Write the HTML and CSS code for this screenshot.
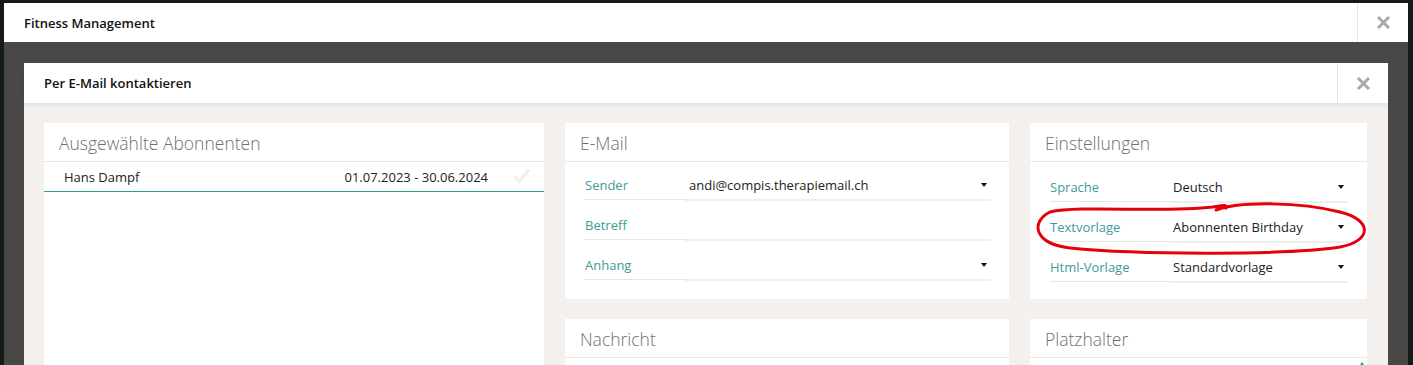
FILE: index.html
```html
<!DOCTYPE html>
<html lang="de">
<head>
<meta charset="utf-8">
<title>Fitness Management</title>
<link rel="stylesheet" href="styles.css">
</head>
<body>
<div class="outer">
  <div class="outer-header">
    <div class="outer-title">Fitness Management</div>
    <div class="close close-outer">
      <svg width="15" height="15" viewBox="0 0 15 15"><path d="M2 2 L13 13 M13 2 L2 13" stroke="#a9a9a9" stroke-width="3" fill="none"/></svg>
    </div>
  </div>
  <div class="outer-body">
    <div class="inner">
      <div class="inner-header">
        <div class="inner-title">Per E-Mail kontaktieren</div>
        <div class="close close-inner">
          <svg width="15" height="15" viewBox="0 0 15 15"><path d="M2 2 L13 13 M13 2 L2 13" stroke="#a9a9a9" stroke-width="3" fill="none"/></svg>
        </div>
      </div>
      <div class="inner-body">
        <section class="panel panel-list">
          <h2 class="panel-title">Ausgewählte Abonnenten</h2>
          <div class="list-row">
            <span class="list-name">Hans Dampf</span>
            <span class="list-date">01.07.2023 - 30.06.2024</span>
            <svg class="list-check" width="16" height="16" viewBox="0 0 16 16"><path d="M1.2 8.6 L5.2 12.4 L13.8 1.4 L15.2 2.6 L5.4 14.8 L0.2 10 Z" fill="none" stroke="#dcdcdc" stroke-width="0.9" stroke-linejoin="round"/></svg>
          </div>
        </section>

        <section class="panel panel-mail">
          <h2 class="panel-title">E-Mail</h2>
          <div class="form">
            <div class="form-row">
              <span class="form-label">Sender</span>
              <span class="form-value">andi@compis.therapiemail.ch<i class="caret"></i></span>
            </div>
            <div class="form-row">
              <span class="form-label">Betreff</span>
              <span class="form-value"></span>
            </div>
            <div class="form-row">
              <span class="form-label">Anhang</span>
              <span class="form-value"><i class="caret"></i></span>
            </div>
          </div>
        </section>

        <section class="panel panel-settings">
          <h2 class="panel-title">Einstellungen</h2>
          <div class="form form-settings">
            <div class="form-row">
              <span class="form-label">Sprache</span>
              <span class="form-value">Deutsch<i class="caret"></i></span>
            </div>
            <div class="form-row">
              <span class="form-label">Textvorlage</span>
              <span class="form-value">Abonnenten Birthday<i class="caret"></i></span>
            </div>
            <div class="form-row">
              <span class="form-label">Html-Vorlage</span>
              <span class="form-value">Standardvorlage<i class="caret"></i></span>
            </div>
          </div>
        </section>

        <section class="panel panel-message">
          <h2 class="panel-title">Nachricht</h2>
        </section>

        <section class="panel panel-placeholder">
          <h2 class="panel-title">Platzhalter</h2>
          <div class="scrollbar"><i class="scroll-up"></i></div>
        </section>
      </div>
    </div>
  </div>
</div>
<svg class="annotation" width="1413" height="365" viewBox="0 0 1413 365">
  <path d="M1216 210 C1240 201 1300 202 1340 212 C1373 220 1372 241 1340 247 C1290 255 1140 255 1070 248 C1034 244 1030 222 1050 212 C1080 205 1160 213 1213 207 C1220 206 1228 204 1226 208" fill="none" stroke="#e6000a" stroke-width="3" stroke-linecap="round" stroke-linejoin="round"/>
</svg>
</body>
</html>
```

FILE: styles.css
```css
* { box-sizing: border-box; }

html, body {
  margin: 0;
  height: 100%;
  overflow: hidden;
}

body {
  position: relative;
  background: #141a18;
  font-family: "Open Sans", "Noto Sans", sans-serif;
  font-size: 13px;
  color: #222;
}

.outer {
  margin: 3px 5px 0 4px;
  background: #4a4846;
  height: calc(100% - 3px);
  display: flex;
  flex-direction: column;
}

.outer-header {
  height: 39px;
  background: #fff;
  display: flex;
  align-items: stretch;
  flex: none;
}

.outer-title,
.inner-title {
  flex: 1;
  display: flex;
  align-items: center;
  padding-left: 20px;
  font-weight: 600;
  font-size: 13px;
  color: #111;
}

.close {
  width: 51px;
  border-left: 1px solid #e4e4e4;
  display: flex;
  align-items: center;
  justify-content: center;
}

.outer-body {
  padding: 21px 20px 0 20px;
  flex: 1;
}

.inner {
  background: #f3f0ed;
  height: 100%;
}

.inner-header {
  height: 40px;
  background: #fff;
  display: flex;
  position: relative;
  box-shadow: 0 2px 4px rgba(0, 0, 0, 0.07);
}

.inner-header .close {
  width: 51px;
}

.inner-body {
  padding: 20px 21px 0 20px;
  display: grid;
  grid-template-columns: 500px 444px 337px;
  grid-template-rows: 176px auto;
  column-gap: 21px;
  row-gap: 20px;
}

.panel {
  background: #fff;
  position: relative;
}

.panel-list {
  grid-row: 1 / span 2;
  grid-column: 1;
  min-height: 260px;
}

.panel-mail { grid-column: 2; grid-row: 1; }
.panel-settings { grid-column: 3; grid-row: 1; }
.panel-message { grid-column: 2; grid-row: 2; min-height: 60px; }
.panel-placeholder { grid-column: 3; grid-row: 2; min-height: 60px; }

.panel-title {
  margin: 0;
  height: 39px;
  border-bottom: 1px solid #e8e8e8;
  padding-left: 15px;
  font-size: 17.5px;
  font-weight: 300;
  line-height: 40px;
  color: #6f6f6f;
}

.list-row {
  height: 30px;
  border-bottom: 1px solid #2e9a94;
  display: flex;
  align-items: center;
  padding: 0 14px 0 20px;
}

.list-name { flex: 1; }

.list-date { margin-right: 26px; }

.list-check { margin-top: -2px; }

.form {
  padding: 0 18px 19px 20px;
}

.form-row {
  height: 40px;
  display: flex;
  align-items: flex-end;
}

.form-row:first-child { height: 38px; }

.form-label,
.form-value {
  line-height: 20px;
  padding-bottom: 4px;
  height: 25px;
}

.form-label {
  width: 100px;
  color: #3f9b9b;
  border-bottom: 1px solid #e6e6e6;
}

.form-value {
  flex: 1;
  padding-left: 4px;
  padding-right: 4px;
  display: flex;
  align-items: center;
  justify-content: space-between;
  border-bottom: 2px solid #eeeeee;
  height: 26px;
  margin-bottom: -1px;
  padding-bottom: 5px;
}

.form-settings {
  padding: 0 19px 17px 20px;
}

.form-settings .form-row:first-child { height: 40px; }

.form-settings .form-label { width: 120px; }

.form-settings .form-value { padding-left: 3px; }

.caret {
  margin-left: auto;
  width: 0;
  height: 0;
  border-left: 3.5px solid transparent;
  border-right: 3.5px solid transparent;
  border-top: 4px solid #111;
}

.scrollbar {
  position: absolute;
  right: 0;
  top: 40px;
  width: 10px;
  height: 20px;
  display: flex;
  justify-content: center;
  padding-top: 3px;
}

.scroll-up {
  width: 0;
  height: 0;
  border-left: 4px solid transparent;
  border-right: 4px solid transparent;
  border-bottom: 6px solid #1ea394;
}

.annotation {
  position: absolute;
  left: 0;
  top: 0;
  pointer-events: none;
}
```
